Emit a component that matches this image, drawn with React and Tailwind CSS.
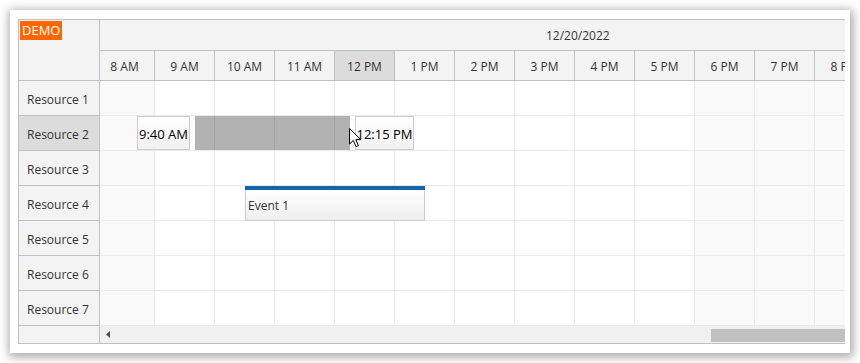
import React from 'react';

const hours = ['8 AM', '9 AM', '10 AM', '11 AM', '12 PM', '1 PM', '2 PM', '3 PM', '4 PM', '5 PM', '6 PM', '7 PM', '8 PM', '9 PM'];
const resources = ['Resource 1', 'Resource 2', 'Resource 3', 'Resource 4', 'Resource 5', 'Resource 6', 'Resource 7'];

const isBusiness = (i) => i >= 1 && i <= 9;

const Cursor = () => (
  <svg width="13" height="20" viewBox="0 0 13 20" className="absolute left-[249px] top-[47px]">
    <path d="M0.5 0.5 L0.5 16 L4.3 12.4 L7 18.6 L9.4 17.6 L6.8 11.6 L11.8 11.6 Z" fill="#fff" stroke="#000" strokeWidth="1" strokeLinejoin="round" />
  </svg>
);

const App = () => {
  return (
    <div className="w-[860px] h-[363px] bg-white pl-[10px] pt-[10px] font-['Open_Sans','Noto_Sans',sans-serif] text-[#333]">
      <div className="w-[840px] h-[343px] bg-white pl-[8px] pt-[9px] shadow-[1px_2px_9px_2px_rgba(0,0,0,0.35)]">
        <div className="w-[827px] h-[325px] flex border-l border-t border-b border-[#c0c0c0] overflow-hidden text-[12px]">

          {/* resource column */}
          <div className="w-[81px] shrink-0 flex flex-col border-r border-[#c0c0c0] bg-[#f3f3f3]">
            <div className="h-[61px] shrink-0 border-b border-[#c0c0c0] pl-[1px] pt-[1px]">
              <span className="inline-block bg-[#ff6600] text-white text-[13px] leading-[19px] px-[2px]">DEMO</span>
            </div>
            {resources.map((r, i) => (
              <div
                key={r}
                className={`h-[35px] shrink-0 border-b border-[#c0c0c0] flex items-center pl-[8px] pt-[3px] ${i === 1 ? 'bg-[#dcdcdc]' : ''}`}
              >
                {r}
              </div>
            ))}
            <div className="flex-1" />
          </div>

          {/* timeline */}
          <div className="flex-1 flex flex-col overflow-hidden">
            <div className="h-[31px] shrink-0 border-b border-[#c0c0c0] bg-[#f3f3f3] flex items-center pl-[446px] pt-[2px] whitespace-nowrap">
              12/20/2022
            </div>
            <div className="h-[30px] shrink-0 border-b border-[#c0c0c0] bg-[#f3f3f3] flex ml-[-5px]">
              {hours.map((h, i) => (
                <div
                  key={h}
                  className={`w-[60px] shrink-0 border-r border-[#c0c0c0] flex items-center justify-center pt-[3px] whitespace-nowrap ${i === 4 ? 'bg-[#dcdcdc]' : ''}`}
                >
                  {h}
                </div>
              ))}
            </div>

            <div className="relative">
              {resources.map((r) => (
                <div key={r} className="h-[35px] border-b border-[#eaeaea] flex ml-[-5px]">
                  {hours.map((h, i) => (
                    <div
                      key={h}
                      className={`w-[60px] shrink-0 border-r border-[#eaeaea] ${isBusiness(i) ? 'bg-white' : 'bg-[#f9f9f9]'}`}
                    />
                  ))}
                </div>
              ))}

              {/* time range selection */}
              <div className="absolute left-[95px] top-[35px] w-[155px] h-[34px] bg-black/30" />
              <div className="absolute left-[37px] top-[35px] w-[53px] h-[34px] border border-[#cccccc] bg-gradient-to-b from-white to-[#f1f1f1] flex items-center justify-center pt-[3px] text-[13px] text-black whitespace-nowrap">
                9:40 AM
              </div>
              <div className="absolute left-[255px] top-[35px] w-[59px] h-[34px] border border-[#cccccc] bg-gradient-to-b from-white to-[#f1f1f1] flex items-center justify-center pt-[3px] text-[13px] text-black whitespace-nowrap">
                12:15 PM
              </div>

              {/* event */}
              <div className="absolute left-[145px] top-[105px] w-[180px] h-[35px] flex flex-col">
                <div className="h-[4px] bg-[#1565a8]" />
                <div className="flex-1 border border-t-0 border-[#cccccc] bg-gradient-to-b from-white to-[#eeeeee] flex items-center pl-[2px] pt-[2px]">
                  Event 1
                </div>
              </div>

              <Cursor />
            </div>

            {/* scrollbar */}
            <div className="flex-1 bg-[#f0f0f0] relative flex items-center">
              <svg width="4" height="7" viewBox="0 0 4 7" className="ml-[6px]">
                <path d="M4 0 L0 3.5 L4 7 Z" fill="#505050" />
              </svg>
              <div className="absolute right-0 top-[3px] w-[134px] h-[13px] bg-[#c1c1c1]" />
            </div>
          </div>
        </div>
      </div>
    </div>
  );
};

export default App;
